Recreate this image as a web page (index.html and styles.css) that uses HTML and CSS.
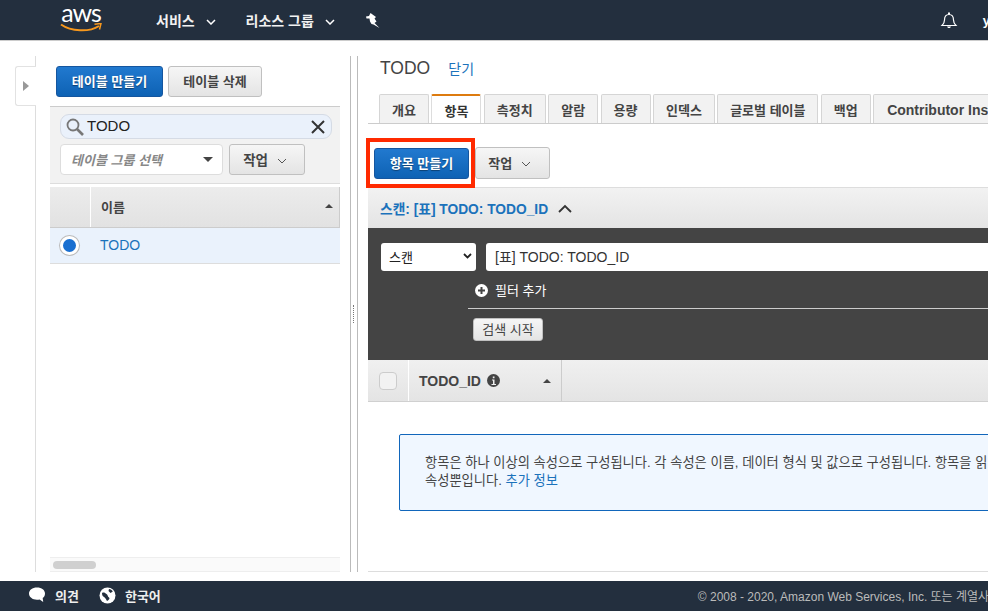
FILE: index.html
```html
<!DOCTYPE html>
<html lang="ko">
<head>
    <meta charset="UTF-8">
    <meta name="viewport" content="width=device-width, initial-scale=1.0">
    <title>DynamoDB</title>
    <link rel="stylesheet" href="styles.css">
</head>
<body>

<header class="topbar">
    <div class="logo">
        <span class="logo-text">aws</span>
        <svg class="logo-smile" width="42" height="10" viewBox="0 0 42 10"><path d="M1 1.500C11 8.500 29 9.500 39 3" fill="none" stroke="#f7981d" stroke-width="2"/><path d="M34.500 1.200L41 0.500L39.500 6.500" fill="none" stroke="#f7981d" stroke-width="1.500"/></svg>
    </div>
    <a class="nav-item nav-first">서비스 <svg class="chev" width="10" height="6" viewBox="0 0 10 6"><path d="M1 1l4 4 4-4" fill="none" stroke="#fff" stroke-width="1.500"/></svg></a>
    <a class="nav-item nav-second">리소스 그룹 <svg class="chev" width="10" height="6" viewBox="0 0 10 6"><path d="M1 1l4 4 4-4" fill="none" stroke="#fff" stroke-width="1.500"/></svg></a>
    <svg class="pin" width="14" height="15" viewBox="0 0 14 15"><path d="M4.500 0L10 4 8.500 5.500 10.500 8.500 8.500 10 9 10.500 13.500 15 7.500 11.500 5.500 11 4 8.500 3.500 5.500 0.500 5.500 0 3.500 3 3Z" fill="#fff"/></svg>
    <svg class="bell" width="18" height="18" viewBox="0 0 18 18"><path d="M2 14.500c1.500-1.500 2.500-2.500 2.500-5.500 0-3 1.500-5.500 4.500-5.500s4.500 2.500 4.500 5.500c0 3 1 4 2.500 5.500Z" fill="none" stroke="#fff" stroke-width="1.200"/><path d="M8 1.500h2v2H8zM7 15.500h4l-1 1.500H8z" fill="#fff"/></svg>
    <span class="user">y</span>
</header>

<main class="console">
    <div class="gutter"></div>

    <section class="left-panel">
        <div class="expand-tab"><span class="expand-arrow"></span></div>

        <div class="left-actions">
            <button class="btn btn-primary btn-table">테이블 만들기</button>
            <button class="btn btn-table-del">테이블 삭제</button>
        </div>

        <div class="filter-box">
            <div class="search">
                <svg width="18" height="18" viewBox="0 0 18 18"><circle cx="7" cy="7" r="5.500" fill="none" stroke="#777" stroke-width="1.800"/><path d="M11 11l6 6" stroke="#777" stroke-width="2.600"/></svg>
                <span class="search-text">TODO</span>
                <svg class="search-clear" width="14" height="14" viewBox="0 0 14 14"><path d="M1 1l12 12M13 1L1 13" stroke="#333" stroke-width="2"/></svg>
            </div>
            <div class="filter-row">
                <div class="group-select"><em>테이블 그룹 선택</em><span class="caret"></span></div>
                <button class="btn btn-action-small">작업 <svg class="chev" width="10" height="6" viewBox="0 0 10 6"><path d="M1 1l4 4 4-4" fill="none" stroke="#555" stroke-width="1"/></svg></button>
            </div>
        </div>

        <div class="table-head">
            <div class="table-head-check"></div>
            <div class="table-head-name">이름<span class="sort-up"></span></div>
        </div>
        <div class="table-row">
            <div class="radio-cell"><span class="radio"></span></div>
            <a class="table-link">TODO</a>
        </div>

        <div class="hscroll"><div class="hscroll-thumb"></div></div>
    </section>

    <div class="splitter"><span class="grip"></span></div>

    <section class="right-panel">
        <div class="title-row">
            <span class="title">TODO</span>
            <a class="close-link">닫기</a>
        </div>

        <ul class="tabs">
            <li class="tab w50">개요</li>
            <li class="tab tab-active">항목</li>
            <li class="tab w62">측정치</li>
            <li class="tab w50">알람</li>
            <li class="tab w50">용량</li>
            <li class="tab w62">인덱스</li>
            <li class="tab w101">글로벌 테이블</li>
            <li class="tab w50">백업</li>
            <li class="tab tab-long">Contributor Ins</li>
        </ul>

        <div class="item-actions">
            <div class="highlight">
                <button class="btn btn-primary btn-create">항목 만들기</button>
            </div>
            <button class="btn btn-action">작업 <svg class="chev" width="10" height="6" viewBox="0 0 10 6"><path d="M1 1l4 4 4-4" fill="none" stroke="#555" stroke-width="1"/></svg></button>
        </div>

        <div class="scan-head">
            <a class="scan-link">스캔: [표] TODO: TODO_ID</a>
            <svg width="14" height="9" viewBox="0 0 14 9"><path d="M1 8l6-6 6 6" fill="none" stroke="#333" stroke-width="1.800"/></svg>
        </div>

        <div class="scan-body">
            <div class="scan-row">
                <div class="scan-select">스캔<svg width="9" height="6" viewBox="0 0 9 6"><path d="M1 1l3.500 3.500L8 1" fill="none" stroke="#222" stroke-width="1.800"/></svg></div>
                <div class="scan-input">[표] TODO: TODO_ID</div>
            </div>
            <div class="add-filter">
                <svg width="13" height="13" viewBox="0 0 13 13"><circle cx="6.500" cy="6.500" r="6.500" fill="#fff"/><path d="M6.500 3v7M3 6.500h7" stroke="#444" stroke-width="2"/></svg>
                <span class="add-filter-label">필터 추가</span>
            </div>
            <div class="scan-rule"></div>
            <button class="btn btn-search">검색 시작</button>
        </div>

        <div class="result-head">
            <div class="result-check"><span class="checkbox"></span></div>
            <div class="result-col">
                TODO_ID
                <svg width="13" height="13" viewBox="0 0 13 13"><circle cx="6.500" cy="6.500" r="6.500" fill="#444"/><path d="M5 5.500h2.500V10H9v1H4.500v-1H6V6.500H5zM5.800 2.500h1.700v1.800H5.800z" fill="#eee"/></svg>
                <span class="sort-up"></span>
            </div>
        </div>

        <div class="info-box">
            항목은 하나 이상의 속성으로 구성됩니다. 각 속성은 이름, 데이터 형식 및 값으로 구성됩니다. 항목을 읽<br>
            속성뿐입니다. <a class="info-link">추가 정보</a>
        </div>

        <div class="right-end"></div>
    </section>
</main>

<footer class="footbar">
    <a class="foot-item foot-first">
        <svg width="18" height="16" viewBox="0 0 18 16"><path d="M9 0.500c4.700 0 8 2.600 8 6 0 2-.9 3.500-2.300 4.500l.5 4-3.600-2.500c-.8.200-1.700.200-2.600.200-4.700 0-8-2.800-8-6.200s3.300-6 8-6z" fill="#fff"/></svg>
        의견
    </a>
    <a class="foot-item foot-second">
        <svg width="17" height="17" viewBox="0 0 17 17"><circle cx="8.500" cy="8.500" r="8" fill="#fff"/><path d="M3 6c2-1 3 0 4.500 1s1 2.500 2.500 3.500-1 3-2 3.500c-1-2-1.500-3-3-4S3 8 3 6zM10 2c1.500 0 3 1 3.800 2.500L11.500 6 9.500 4z" fill="#232f3e"/></svg>
        한국어
    </a>
    <span class="copyright">© 2008 - 2020, Amazon Web Services, Inc. 또는 계열사</span>
</footer>

</body>
</html>
```

FILE: styles.css
```css
* {
    box-sizing: border-box;
}

html, body {
    height: 100%;
}

body {
    margin: 0;
    overflow: hidden;
    display: flex;
    flex-direction: column;
    font-family: "Liberation Sans", "Noto Sans CJK KR", sans-serif;
    font-size: 13px;
    color: #444;
    background-color: #fff;
}

.btn {
    font-family: inherit;
    font-size: 13px;
    font-weight: bold;
    color: #444;
    border: 1px solid #c0c0c0;
    border-radius: 3px;
    background: linear-gradient(#f6f6f6, #e4e4e4);
    padding: 0 0 2px;
    white-space: nowrap;
    flex-shrink: 0;
}

.btn-primary {
    color: #fff;
    border: 1px solid #15569f;
    background: linear-gradient(#2179cf, #0e62b4);
    text-shadow: 0 1px 1px rgba(0, 0, 0, 0.4);
}

.chev {
    margin-left: 5px;
    vertical-align: 1px;
}

.sort-up {
    width: 0;
    height: 0;
    border-left: 4px solid transparent;
    border-right: 4px solid transparent;
    border-bottom: 4px solid #444;
}

/* top bar */
.topbar {
    height: 41px;
    flex-shrink: 0;
    display: flex;
    align-items: center;
    background-color: #232f3e;
    border-bottom: 1px solid #ccc;
    padding-left: 60px;
    color: #fff;
}

.logo {
    width: 42px;
    height: 36px;
    display: flex;
    flex-direction: column;
    align-items: center;
    flex-shrink: 0;
    margin-top: -5px;
}

.logo-text {
    font-family: "Lato", sans-serif;
    font-size: 25px;
    line-height: 30px;
    margin: -3px 0;
    letter-spacing: -1px;
}

.logo-smile {
    margin-top: -1px;
}

.nav-item {
    font-size: 14px;
    font-weight: bold;
    color: #f2f2f2;
    white-space: nowrap;
}

.nav-item .chev {
    margin-left: 7px;
}

.nav-first {
    margin-left: 54px;
}

.nav-second {
    margin-left: 30px;
}

.pin {
    margin-left: 31px;
    flex-shrink: 0;
}

.bell {
    margin-left: 560px;
    flex-shrink: 0;
}

.user {
    margin-left: 25px;
    font-weight: bold;
    font-size: 13px;
}

/* main area */
.console {
    flex: 1;
    min-height: 0;
    display: flex;
    overflow: hidden;
    padding-top: 15px;
}

.gutter {
    width: 35px;
    flex-shrink: 0;
}

.left-panel {
    position: relative;
    width: 315px;
    height: 516px;
    flex-shrink: 0;
    display: flex;
    flex-direction: column;
    border-left: 1px solid #ddd;
    padding-left: 14px;
    padding-right: 10px;
}

.expand-tab {
    position: absolute;
    left: -21px;
    top: 10px;
    width: 21px;
    height: 40px;
    display: flex;
    align-items: center;
    justify-content: center;
    background-color: #fff;
    border: 1px solid #e2e2e2;
    border-right: 0;
    border-radius: 3px 0 0 3px;
}

.expand-arrow {
    border-top: 5px solid transparent;
    border-bottom: 5px solid transparent;
    border-left: 6px solid #999;
}

.left-actions {
    display: flex;
    gap: 5px;
    padding: 10px 0 9px 6px;
}

.btn-table {
    width: 107px;
    height: 31px;
}

.btn-table-del {
    width: 94px;
    height: 31px;
}

.filter-box {
    height: 78px;
    background-color: #f2f2f2;
    border-top: 1px solid #ccc;
    border-bottom: 1px solid #ddd;
    padding: 7px 8px 0 10px;
}

.search {
    height: 25px;
    display: flex;
    align-items: center;
    padding: 0 6px 0 5px;
    background-color: #eaf1fb;
    border: 1px solid #d5dbe5;
    border-radius: 9px;
    color: #222;
}

.search-text {
    font-size: 15px;
    margin: 0 0 2px 3px;
}

.search-clear {
    margin-left: auto;
}

.filter-row {
    display: flex;
    gap: 6px;
    margin-top: 5px;
}

.group-select {
    width: 163px;
    height: 31px;
    display: flex;
    align-items: center;
    justify-content: space-between;
    padding: 0 9px 0 10px;
    background-color: #fff;
    border: 1px solid #ddd;
    border-radius: 4px;
    color: #888;
}

.group-select em {
    font-weight: bold;
}

.caret {
    border-left: 5px solid transparent;
    border-right: 5px solid transparent;
    border-top: 5px solid #444;
}

.btn-action-small {
    width: 76px;
    height: 31px;
    padding-right: 4px;
    font-size: 13.500px;
}

.table-head {
    height: 41px;
    margin-top: 3px;
    display: flex;
    background: linear-gradient(#ececec, #e2e2e2);
    border-bottom: 1px solid #ccc;
}

.table-head-check {
    width: 41px;
    border-right: 1px solid #fff;
}

.table-head-name {
    flex: 1;
    display: flex;
    align-items: center;
    justify-content: space-between;
    padding: 0 6px 2px 10px;
    font-weight: bold;
    border-right: 1px solid #ccc;
}

.table-row {
    height: 36px;
    display: flex;
    align-items: center;
    background-color: #eaf2fc;
    border-bottom: 1px solid #ddd;
}

.radio-cell {
    width: 50px;
    padding-left: 10px;
}

.radio {
    display: block;
    width: 19px;
    height: 19px;
    border-radius: 50%;
    background-color: #1a6fd0;
    border: 3px solid #fff;
    box-shadow: 0 0 0 1px #bbb;
}

.table-link {
    font-size: 14px;
    color: #1b72bb;
    padding-bottom: 2px;
}

.hscroll {
    margin-top: auto;
    height: 15px;
    background-color: #fafafa;
    border-top: 1px solid #eee;
    border-bottom: 1px solid #eee;
    padding: 3px;
}

.hscroll-thumb {
    width: 43px;
    height: 8px;
    border-radius: 4px;
    background-color: #d0d0d0;
}

.splitter {
    width: 8px;
    height: 516px;
    flex-shrink: 0;
    display: flex;
    align-items: center;
    justify-content: center;
    background-color: #fff;
    border-left: 1px solid #bbb;
    border-right: 1px solid #bbb;
}

.grip {
    width: 2px;
    height: 18px;
    border-left: 1px dotted #777;
}

/* right panel */
.right-panel {
    flex: none;
    width: 700px;
    margin-left: 10px;
}

.title-row {
    height: 38px;
    display: flex;
    align-items: baseline;
    padding: 2px 0 0 12px;
    white-space: nowrap;
}

.title {
    font-size: 17.500px;
    color: #444;
}

.close-link {
    margin-left: 18px;
    font-size: 14px;
    color: #1b72bb;
}

.tabs {
    list-style-type: none;
    display: flex;
    gap: 2.400px;
    height: 30px;
    margin: 0;
    padding: 0 0 0 11px;
    overflow: hidden;
    border-bottom: 1px solid #ccc;
}

.tab {
    height: 30px;
    flex-shrink: 0;
    display: flex;
    align-items: center;
    justify-content: center;
    font-weight: bold;
    white-space: nowrap;
    color: #444;
    background-color: #f2f2f2;
    border: 1px solid #d5d5d5;
    border-bottom: 0;
    border-radius: 2px 2px 0 0;
}

.w50 {
    width: 50px;
}

.w62 {
    width: 62px;
}

.w101 {
    width: 101px;
}

.tab-active {
    width: 50px;
    height: 31px;
    background-color: #fff;
    color: #333;
    border-color: #ddd;
    border-top: 2px solid #dd7b0f;
}

.tab-long {
    padding: 0 0 0 13px;
    font-size: 14px;
    width: 130px;
    justify-content: flex-start;
}

.item-actions {
    height: 63px;
    display: flex;
    align-items: flex-start;
    padding: 14px 0 0 0;
    margin-left: -2px;
}

.highlight {
    width: 109px;
    height: 50px;
    flex-shrink: 0;
    border: 4px solid #ff2a00;
    background-color: #fff;
    padding: 6px 0 0 4px;
    margin-bottom: -10px;
    display: flex;
}

.btn-create {
    width: 95px;
    height: 31px;
}

.btn-action {
    width: 75px;
    height: 32px;
    margin-top: 9px;
    padding-right: 6px;
}

.scan-head {
    height: 42px;
    display: flex;
    align-items: center;
    gap: 10px;
    padding-left: 12px;
    background: linear-gradient(#f2f2f2, #e4e4e4);
    border-top: 1px solid #ddd;
    border-bottom: 1px solid #444;
}

.scan-link {
    font-size: 13.750px;
    font-weight: bold;
    color: #1b72bb;
}

.scan-body {
    height: 131px;
    background-color: #444;
    padding: 14px 0 0 13px;
    color: #fff;
}

.scan-row {
    display: flex;
    gap: 10px;
}

.scan-select {
    width: 95px;
    height: 28px;
    display: flex;
    align-items: center;
    justify-content: space-between;
    padding: 0 4px 2px 8px;
    background-color: #fff;
    border-radius: 3px;
    color: #222;
}

.scan-input {
    flex: 1;
    height: 28px;
    display: flex;
    align-items: center;
    padding: 0 0 2px 9px;
    background-color: #fff;
    border-radius: 3px;
    font-size: 14px;
    color: #333;
}

.add-filter {
    display: flex;
    align-items: center;
    gap: 7px;
    height: 24px;
    margin: 7px 0 0 94px;
    color: #fff;
}

.add-filter-label {
    padding-bottom: 2px;
}

.scan-rule {
    height: 1px;
    margin: 6px 0 0 87px;
    background-color: #ccc;
}

.btn-search {
    display: block;
    width: 70px;
    height: 23px;
    margin: 9px 0 0 92px;
    font-weight: normal;
    border-radius: 3px;
}

.result-head {
    height: 42px;
    display: flex;
    background: linear-gradient(#f0f0f0, #e4e4e4);
    border-bottom: 1px solid #d0d0d0;
}

.result-check {
    width: 41px;
    display: flex;
    align-items: center;
    padding-left: 11px;
    border-right: 1px solid #fff;
}

.checkbox {
    width: 18px;
    height: 18px;
    border: 1px solid #ccc;
    border-radius: 4px;
    background-color: #f2f2f2;
}

.result-col {
    width: 153px;
    display: flex;
    align-items: center;
    gap: 6px;
    padding: 0 10px;
    font-size: 14px;
    font-weight: bold;
    border-right: 1px solid #ccc;
}

.result-col .sort-up {
    margin-left: auto;
}

.info-box {
    width: 620px;
    height: 77px;
    margin: 32px 0 0 31px;
    padding: 19px 0 0 25px;
    font-size: 13.250px;
    line-height: 18px;
    white-space: nowrap;
    overflow: hidden;
    background-color: #f0f7ff;
    border: 1px solid #1166bb;
    border-radius: 2px;
}

.info-link {
    color: #1b72bb;
}

.right-end {
    height: 1px;
    margin-top: 60px;
    background-color: #ddd;
}

/* bottom bar */
.footbar {
    height: 30px;
    flex-shrink: 0;
    display: flex;
    align-items: center;
    padding-bottom: 2px;
    background-color: #232f3e;
    color: #eee;
    overflow: hidden;
    white-space: nowrap;
}

.foot-item {
    display: flex;
    align-items: center;
    gap: 9px;
    font-weight: bold;
    flex-shrink: 0;
}

.foot-first {
    margin-left: 28px;
}

.foot-second {
    margin-left: 20px;
}

.copyright {
    margin-left: 537px;
    font-size: 12px;
    color: #bbb;
    flex-shrink: 0;
}
```
